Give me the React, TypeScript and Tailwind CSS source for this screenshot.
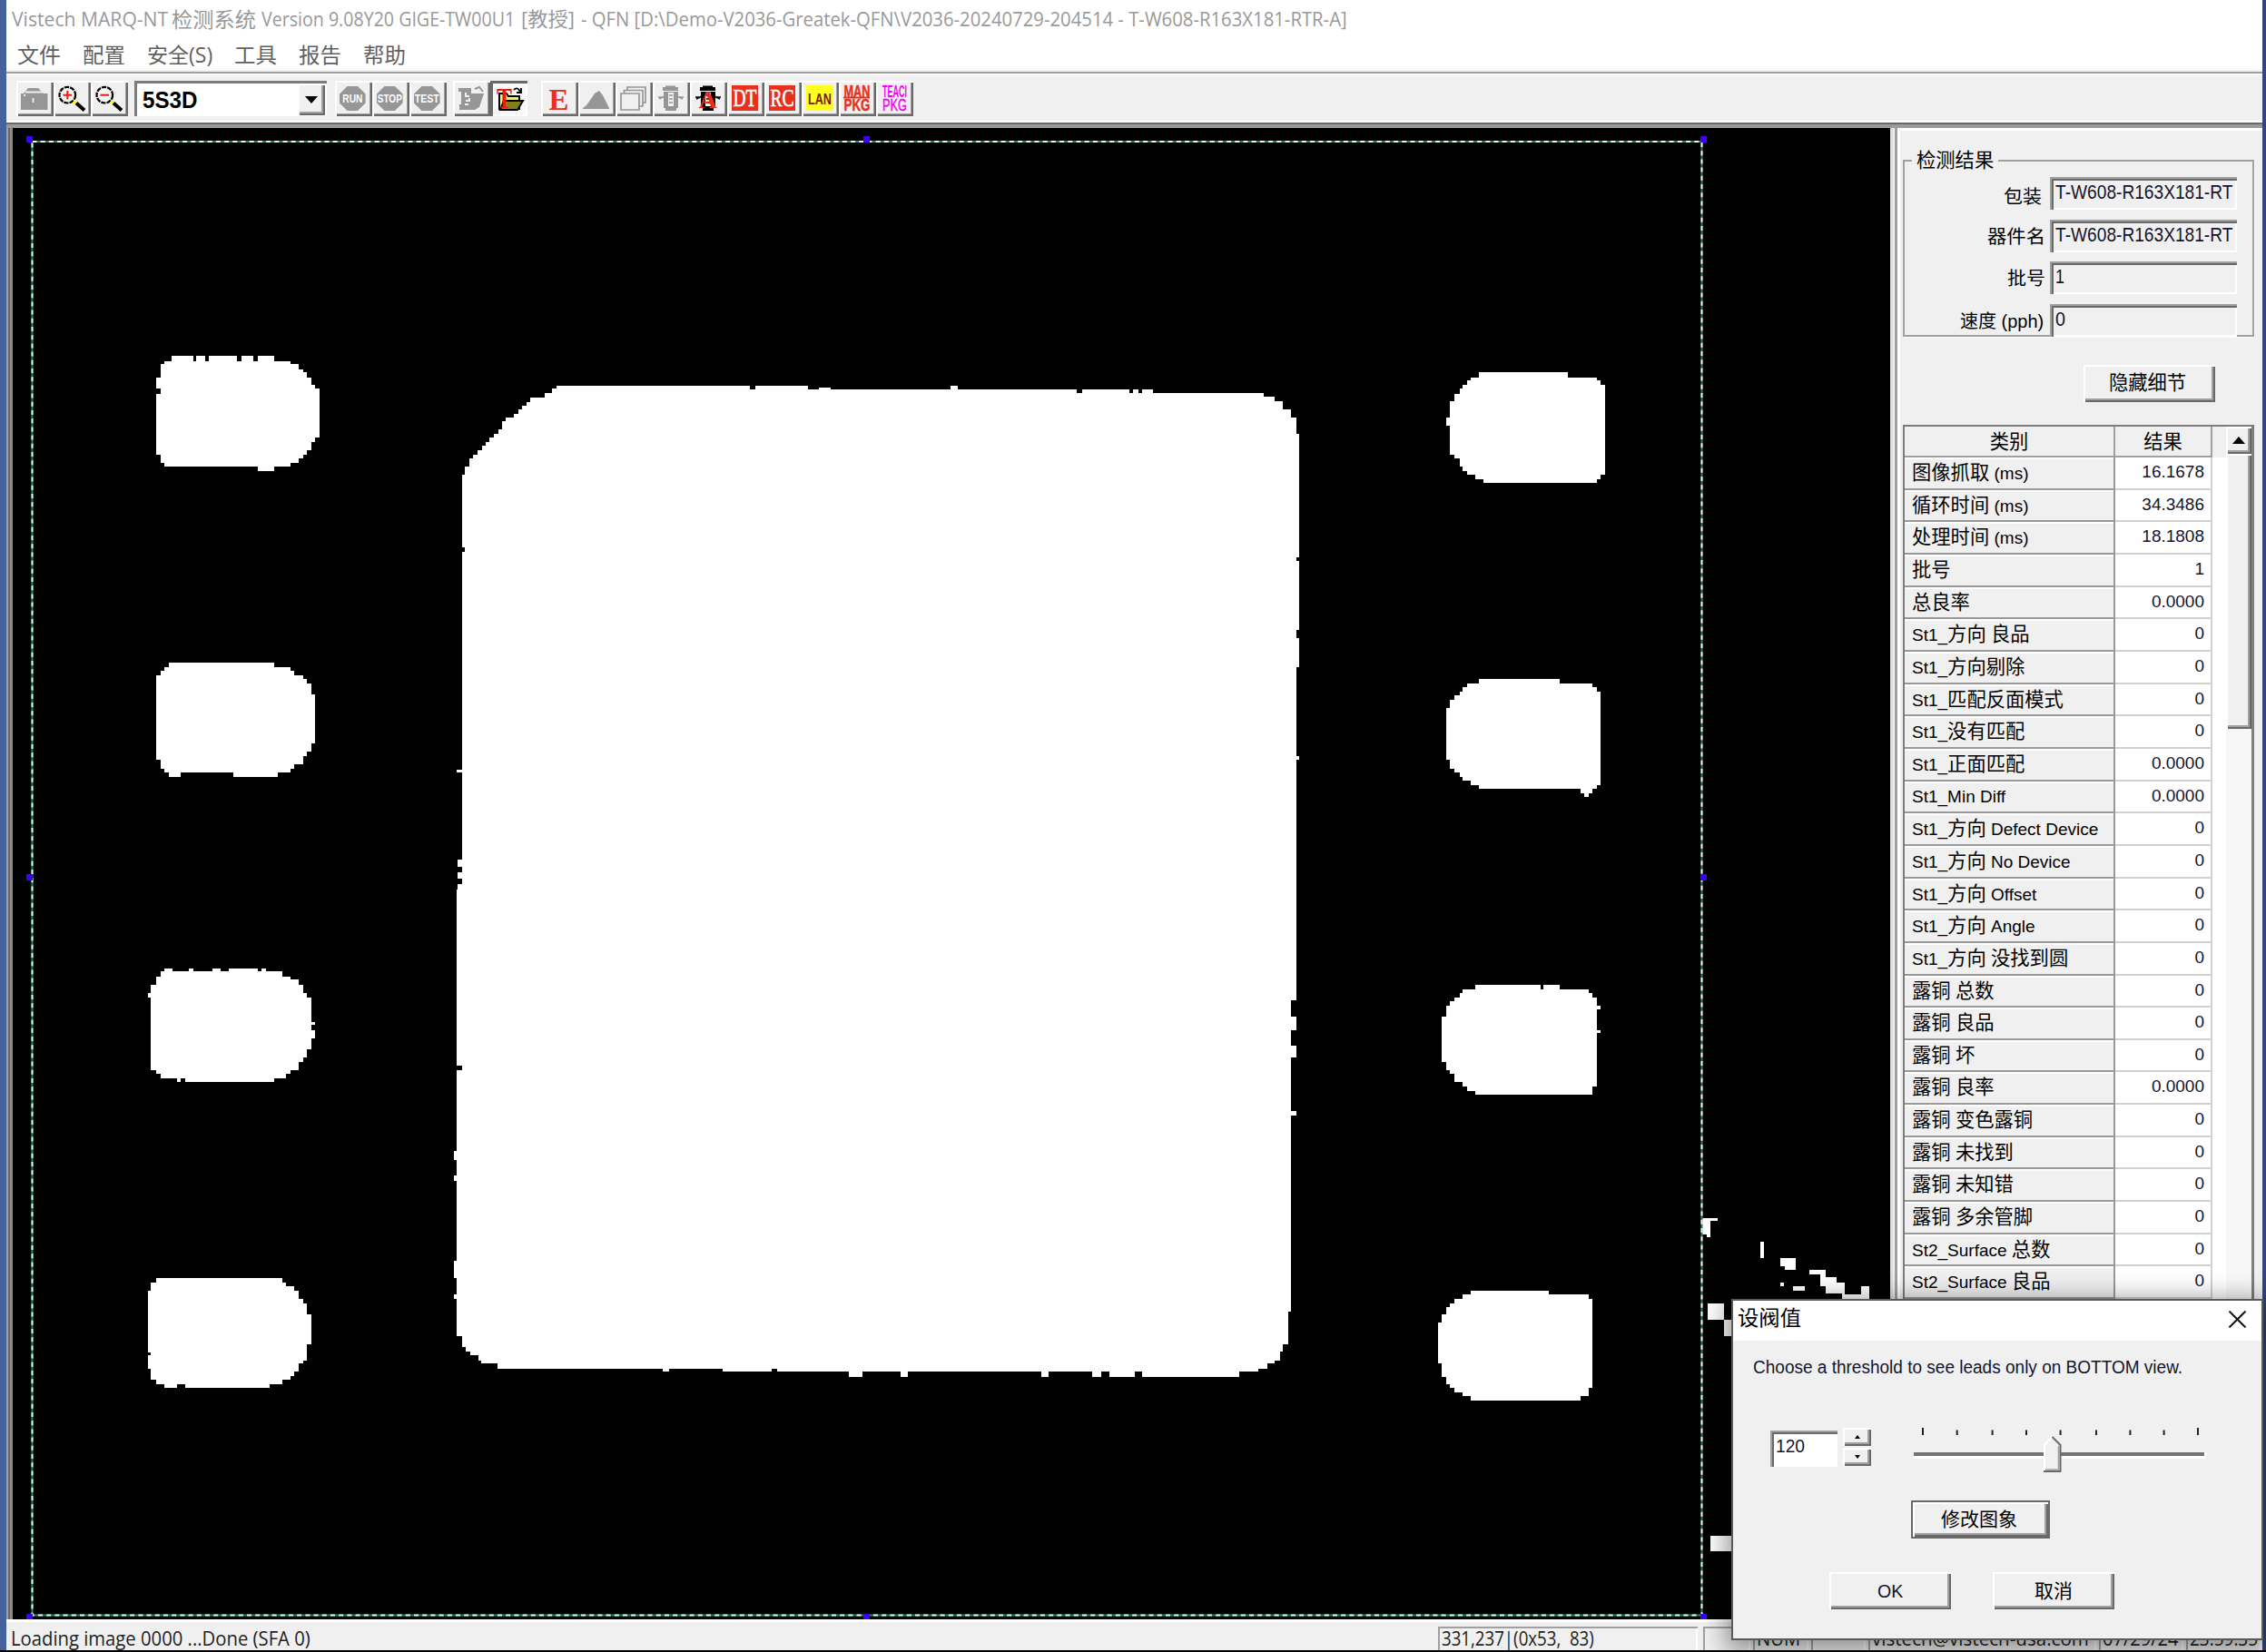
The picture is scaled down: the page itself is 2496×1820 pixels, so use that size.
import { useLayoutEffect, useRef, useState, type ReactNode } from 'react'

const ARIAL = "font-['Liberation_Sans','Noto_Sans_CJK_SC',sans-serif]"
const SEGOE = "font-['Open_Sans','Noto_Sans_CJK_SC',sans-serif]"

/* Single line of text condensed or stretched to an exact width. */
function Fit({ w, children, className = '' }: { w: number; children: ReactNode; className?: string }) {
  const ref = useRef<HTMLSpanElement>(null)
  const [scale, setScale] = useState(1)
  useLayoutEffect(() => {
    const measure = () => {
      if (ref.current && ref.current.offsetWidth) setScale(w / ref.current.offsetWidth)
    }
    measure()
    document.fonts?.ready.then(measure)
  }, [w])
  return (
    <span className={`inline-block shrink-0 whitespace-pre ${className}`} style={{ width: w }}>
      <span ref={ref} className="inline-block origin-left" style={{ transform: `scaleX(${scale})` }}>
        {children}
      </span>
    </span>
  )
}

/* Latin runs keep the row's size, Chinese runs are slightly larger. */
function Mixed({ text }: { text: string }) {
  return (
    <>
      {text.split(/([\u4e00-\u9fff]+)/).map((part, i) =>
        i % 2 ? (
          <span key={i} className="text-[21.3px]">{part}</span>
        ) : (
          <span key={i}>{part}</span>
        ),
      )}
    </>
  )
}

const RAISED = 'shadow-[inset_2px_2px_#ffffff,inset_-2px_-2px_#696969,inset_-4px_-4px_#a0a0a0]'
const SUNKEN = 'shadow-[inset_2px_2px_#a0a0a0,inset_4px_4px_#696969,inset_-2px_-2px_#ffffff]'

function Tool({ children, pressed }: { children: ReactNode; pressed?: boolean }) {
  return (
    <button
      className={`h-[39px] w-[41px] shrink-0 ${
        pressed
          ? 'bg-[#f8f8f8] shadow-[inset_3px_3px_#696969,inset_-2px_-2px_#ffffff]'
          : 'shadow-[inset_2px_2px_#ffffff,inset_-2px_-2px_#696969,inset_-3px_-3px_#a0a0a0]'
      }`}
    >
      <svg viewBox="0 0 41 39" className="h-[39px] w-[41px] overflow-visible">{children}</svg>
    </button>
  )
}

function Glass({ plus }: { plus?: boolean }) {
  return (
    <Tool>
      <circle cx="15.3" cy="15.7" r="8.8" fill="#f4f4f4" stroke="#000" strokeWidth="2.2" strokeDasharray="5.2 1.1" />
      <path d="M10.5 15.7H20" stroke="#e81c0c" strokeWidth="2" />
      {plus && <path d="M15.3 11V20.4" stroke="#e81c0c" strokeWidth="2" />}
      <path d="M22 22.5L26 26" stroke="#ffff00" strokeWidth="3.4" />
      <path d="M25 24.5L34 32.5" stroke="#000" strokeWidth="4" />
    </Tool>
  )
}

function Sign({ label }: { label: string }) {
  return (
    <Tool>
      <path d="M13.5 6H25L33.6 14.5V24.5L25 33H13.5L5 24.5V14.5Z" fill="#969696" />
      <text x="19.3" y="24" fontSize="13" fontWeight="700" fill="#fff" textAnchor="middle" textLength={label.length > 3 ? 27 : 22} lengthAdjust="spacingAndGlyphs" className={ARIAL}>
        {label}
      </text>
    </Tool>
  )
}

function Plate({ label }: { label: string }) {
  return (
    <Tool>
      <rect x="5" y="5" width="29" height="28" fill="#e8301c" />
      <text x="19.5" y="28" fontSize="27" fill="#fff" stroke="#fff" strokeWidth="0.6" textAnchor="middle" textLength="26" lengthAdjust="spacingAndGlyphs" className="font-['Liberation_Serif',serif]">
        {label}
      </text>
    </Tool>
  )
}

function Lantern({ color, hole }: { color: string; hole: string }) {
  return (
    <>
      <path d="M11 7H28V11H11ZM14 5.500H25V8H14ZM12 12H28V30H12ZM14 29H26V33H14Z" fill={color} />
      <path d="M17 13H23V28H17Z" fill={hole} />
      <path d="M18 16H22M18 20H22M18 24H22" stroke={color} strokeWidth="1.6" />
      <path d="M13 17L7 20M27 17L33 20M6 18H10M30 18H34" stroke={color} strokeWidth="1.6" />
    </>
  )
}

function Toolbar() {
  return (
    <div className="flex h-[50px] items-start bg-[#f0f0f0] pt-[6px] pl-[11px]">
      <Tool>
        <path d="M8 14L13 8H24L30 14" fill="#969696" />
        <path d="M5 14H34.500V32H5Z" fill="#969696" />
        <path d="M10 12.500H29M18.500 19V24M8 16H10" stroke="#f0f0f0" strokeWidth="1.800" />
      </Tool>
      <Glass plus />
      <Glass />
      <div className="ml-[7px] flex h-[39px] w-[212px] bg-white p-[3px] pr-[2px] shadow-[inset_3px_3px_#7c7c7c,inset_-2px_-2px_#ffffff]">
        <div className={`flex-1 pl-[6px] text-[25px] leading-[37px] font-bold text-black ${ARIAL}`}>
          <Fit w={61}>5S3D</Fit>
        </div>
        <div className={`flex h-[35px] w-[30px] items-center justify-center bg-[#f0f0f0] ${RAISED}`}>
          <svg viewBox="0 0 14 8" className="h-[8px] w-[14px]"><path d="M0 0H14L7 8Z" fill="#000" /></svg>
        </div>
      </div>
      <div className="ml-[9px] flex">
        <Sign label="RUN" />
        <Sign label="STOP" />
        <Sign label="TEST" />
      </div>
      <div className="ml-[7px] flex">
        <Tool>
          <path d="M6 8H20V14H34L29 29L24 32H7V26H9V12H6Z" fill="#969696" />
          <path d="M14 13V17H18M14 22H18V19M26 10L31 8L32 13M13 26H17" fill="none" stroke="#f0f0f0" strokeWidth="2" />
          <path d="M24 9L29 7L33 12" fill="none" stroke="#969696" strokeWidth="2" />
        </Tool>
        <Tool pressed>
          <path d="M10 14H18L20 17H32V31H10Z" fill="#f5ee6a" stroke="#000" strokeWidth="2" />
          <path d="M15 22H36L30 32H11Z" fill="#80801a" stroke="#000" strokeWidth="2" />
          <text x="15.500" y="29.500" fontSize="31" fontWeight="700" fill="#e81c0c" textAnchor="middle" textLength="17" lengthAdjust="spacingAndGlyphs" className="font-['Liberation_Serif',serif]">T</text>
          <path d="M26 10Q30 6 33 12M34 8V13H29" fill="none" stroke="#000" strokeWidth="1.800" />
        </Tool>
      </div>
      <div className="ml-[15px] flex">
        <Tool>
          <text x="19.500" y="31.500" fontSize="34" fontWeight="700" fill="#e8301c" textAnchor="middle" textLength="22" lengthAdjust="spacingAndGlyphs" className="font-['Liberation_Serif',serif]">E</text>
        </Tool>
        <Tool>
          <path d="M5 30L9 27L14 20L18 14L23 11L27 16L31 24L34 30V31H5Z" fill="#969696" />
        </Tool>
        <Tool>
          <path d="M13 7H33V24H13Z" fill="#f0f0f0" stroke="#969696" strokeWidth="1.700" />
          <path d="M9.500 10.500H30V28H9.500Z" fill="#f0f0f0" stroke="#969696" strokeWidth="1.700" />
          <path d="M6 14H26V32H6Z" fill="#f0f0f0" stroke="#969696" strokeWidth="1.700" />
        </Tool>
        <Tool><Lantern color="#969696" hole="#f0f0f0" /></Tool>
        <Tool>
          <Lantern color="#000" hole="#f0f0f0" />
          <text x="19.500" y="30" fontSize="28" fontWeight="700" fill="#e8301c" textAnchor="middle" className="font-['Liberation_Serif',serif]">A</text>
        </Tool>
        <Plate label="DT" />
        <Plate label="RC" />
        <Tool>
          <rect x="5" y="5" width="30" height="28" fill="#ffff20" />
          <text x="20" y="25.500" fontSize="16" fill="#7a2000" fontWeight="700" textAnchor="middle" textLength="26" lengthAdjust="spacingAndGlyphs" className={ARIAL}>LAN</text>
        </Tool>
        <Tool>
          <path d="M5 18.500H34" stroke="#e8301c" strokeWidth="2" />
          <text x="20" y="18" fontSize="18" fill="#e8301c" stroke="#e8301c" strokeWidth="0.5" fontWeight="700" textAnchor="middle" textLength="29" lengthAdjust="spacingAndGlyphs" className={ARIAL}>MAN</text>
          <text x="20" y="33" fontSize="18.500" fill="#e8301c" stroke="#e8301c" strokeWidth="0.5" fontWeight="700" textAnchor="middle" textLength="29" lengthAdjust="spacingAndGlyphs" className={ARIAL}>PKG</text>
        </Tool>
        <Tool>
          <text x="20.500" y="18" fontSize="18" fill="#f000f0" fontWeight="700" textAnchor="middle" textLength="27" lengthAdjust="spacingAndGlyphs" className={ARIAL}>TEACI</text>
          <text x="20.500" y="33" fontSize="18.500" fill="#f000f0" stroke="#f000f0" strokeWidth="0.4" textAnchor="middle" textLength="27" lengthAdjust="spacingAndGlyphs" className={ARIAL}>PKG</text>
        </Tool>
      </div>
    </div>
  )
}

const LEFT_TOP = [
  'M125 128H142V88H152V78H178V63H249V78H259V63H287V78H301V63H394V78H408V63H447V78H462V63H516V78H570V88H597V103H612V113H624V128H640V152H650V163H667V313H650V328H640V353H624V368H612V378H597V393H570V403H516V418H463V403H152V393H142V368H125V178H142V163H125Z',
  'M125 1047H142V1033H152V1022H168V1008H516V1022H570V1033H581V1047H612V1058H624V1072H640V1107H650V1257H640V1282H624V1297H612V1322H581V1337H570V1347H527V1362H382V1347H206V1362H168V1347H152V1337H142V1307H125Z',
]
const RIGHT_TOP = [
  'M730 211H741V157H757V131H773V115H784V103H799V88H811V77H837V61H1131V77H1228V88H1239V103H1255V398H1239V414H1228V426H853V414H826V398H799V388H784V372H773V345H757V334H741V238H730Z',
  'M730 1169H741V1143H757V1127H773V1116H784V1100H799V1089H837V1073H1105V1089H1212V1100H1228V1116H1239V1425H1228V1437H1212V1452H1201V1463H1185V1452H1174V1437H837V1425H811V1410H784V1398H773V1384H757V1372H741V1340H730Z',
]
const LEFT_BOTTOM = [
  'M98 132H109V104H125V77H142V61H152V50H179V61H233V50H248V61H313V50H340V61H366V50H463V61H473V50H490V61H543V77H570V88H597V104H612V131H624V147H640V227H650V238H640V254H650V281H640V318H624V345H612V361H597V388H570V398H554V414H516V426H221V414H206V426H195V414H142V398H125V388H109V147H98Z',
  'M98 1116H109V1089H125V1073H543V1089H554V1100H581V1116H597V1143H612V1158H624V1195H640V1292H624V1346H612V1357H597V1384H581V1398H570V1410H543V1426H500V1437H221V1426H195V1437H152V1426H125V1410H109V1373H98V1330H109V1319H98Z',
]
const RIGHT_BOTTOM = [
  'M714 211H730V174H741V158H757V147H773V131H784V120H826V104H1041V120H1051V104H1105V120H1201V131H1212V147H1228V174H1239V185H1228V254H1239V265H1228V441H1212V468H826V457H799V441H784V426H757V398H741V388H730V361H714Z',
  'M703 1222H714V1195H730V1169H741V1158H757V1142H784V1127H810V1115H1067V1127H1201V1142H1212V1437H1201V1464H1174V1480H810V1464H784V1453H757V1437H741V1426H730V1400H714V1357H703Z',
]
const DEBRIS =
  'M35 65H80V76H59V129H50V119H35ZM195 145H204V199H195ZM248 198H292V236H261V226H248ZM328 236H371V262H401V280H424V318H468V290H490V337H417V316H372V290H358V253H328ZM248 279H260V290H248ZM284 290H315V306H284ZM51 348H95V402H51ZM95 402H125V456H95ZM59 1115H125V1167H59Z'

const DIE =
  'M590 438V438H584.300V442.500H580V447H575.300V451.400H571.300V455.700H566V460H557.300V464.300H553.300V473H548.700V478H544.300V482H539.300V487H535.300V491H530.700V496H526.300V501H521.300V505H517.300V513.600H512.300V523H508.700V563.600H508.700V603H512.300V608H508.700V847.500H503.300V851H508.700V947H504V955H508.700V961H504V968H508.700V974H504V980H503.300V1174H509V1179H503.300V1268H500V1277.700H503.300V1295.300H500V1300.700H503.300V1389H500V1407.700H503.300V1425.700H500V1430.700H503.300V1471.700H509V1484H512.700V1489H517.700V1493H526.700V1498.700H530V1502H548.300V1507.700H730V1511.300H737V1507.700H796V1511.300H850V1507.700H856V1511.300H935V1516.700H950V1511.300H992V1516.700H1000V1511.300H1147V1516.700H1155V1511.300H1203V1516.700H1213V1511.300H1222V1516.700H1250V1511.300H1258V1516.700H1365V1511.300H1386.300V1507.700H1395.700V1502.300H1404.300V1498.700H1409.700V1489.300H1413.300V1480.700H1418.700V1445H1422.300V1229.300H1427.700V1224H1422.300V1165H1427.700V1152.300H1422.300V1135H1427.700V1120.300H1422.300V1102.300H1427.700V837.300H1431V833.300H1427.700V735.300H1431V702.700H1427.700V694H1431V617.700H1427.700V614H1431V478.300H1427.700V460.300H1422V451.300H1413V442.300H1404.300V437.300H1391.700V433.300H1270V429H1258V433H1254V429H1248V433H1244V429H1192V433H1186V429H1055V424.500H1047V429H915V427H902V429H890V424.500H832V429H826V424.500H613V428H608V433H600V438Z'

function Viewport() {
  const handles = [
    [29, 150], [951, 150], [1873, 150],
    [29, 963], [1873, 963],
    [29, 1778], [951, 1778], [1873, 1778],
  ]
  return (
    <svg viewBox="14 141 2068 1643" className="h-[1643px] w-[2068px] shrink-0 bg-black">
      <g fill="#fff" shapeRendering="crispEdges">
        <path d={DIE} />
        <g transform="translate(130 370) scale(0.33333 0.35714)">{LEFT_TOP.map((d) => <path key={d} d={d} />)}</g>
        <g transform="translate(1350 390) scale(0.33333)">{RIGHT_TOP.map((d) => <path key={d} d={d} />)}</g>
        <g transform="translate(130 1050) scale(0.33333)">{LEFT_BOTTOM.map((d) => <path key={d} d={d} />)}</g>
        <g transform="translate(1350 1050) scale(0.33333)">{RIGHT_BOTTOM.map((d) => <path key={d} d={d} />)}</g>
        <path transform="translate(1860 1320) scale(0.40568 0.33333)" d={DEBRIS} />
      </g>
      <rect x="35.500" y="156" width="1839" height="1623.500" fill="none" stroke="#1d8a6c" strokeWidth="2" />
      <rect x="35.500" y="156" width="1839" height="1623.500" fill="none" stroke="#f4f4f4" strokeWidth="2" strokeDasharray="5 4.200" />
      {handles.map(([x, y]) => <rect key={`${x}-${y}`} x={x} y={y} width="7" height="7" fill="#3c00ff" />)}
    </svg>
  )
}

const ROWS: [string, string][] = [
  ['图像抓取 (ms)', '16.1678'],
  ['循环时间 (ms)', '34.3486'],
  ['处理时间 (ms)', '18.1808'],
  ['批号', '1'],
  ['总良率', '0.0000'],
  ['St1_方向 良品', '0'],
  ['St1_方向剔除', '0'],
  ['St1_匹配反面模式', '0'],
  ['St1_没有匹配', '0'],
  ['St1_正面匹配', '0.0000'],
  ['St1_Min Diff', '0.0000'],
  ['St1_方向 Defect Device', '0'],
  ['St1_方向 No Device', '0'],
  ['St1_方向 Offset', '0'],
  ['St1_方向 Angle', '0'],
  ['St1_方向 没找到圆', '0'],
  ['露铜 总数', '0'],
  ['露铜 良品', '0'],
  ['露铜 坏', '0'],
  ['露铜 良率', '0.0000'],
  ['露铜 变色露铜', '0'],
  ['露铜 未找到', '0'],
  ['露铜 未知错', '0'],
  ['露铜 多余管脚', '0'],
  ['St2_Surface 总数', '0'],
  ['St2_Surface 良品', '0'],
]

function Field({ label, value, labelWidth, gap, valueWidth }: { label: string; value: string; labelWidth: number; gap: string; valueWidth: number }) {
  return (
    <div className="flex h-[46.500px] items-start justify-end">
      <span className={`text-[20px] leading-[30px] ${gap}`}>
        <Fit w={labelWidth}>{label}</Fit>
      </span>
      <div className={`h-[36px] w-[206px] overflow-hidden pl-[6px] text-[21.500px] leading-[34px] text-[#14142c] ${SUNKEN}`}>
        <Fit w={valueWidth}>{value}</Fit>
      </div>
    </div>
  )
}

function ResultsPanel() {
  return (
    <aside className={`flex w-[405px] shrink-0 flex-col border-l-[3px] border-[#a0a0a0] bg-[#f0f0f0] pl-[6px] text-black shadow-[inset_3px_3px_#ffffff] ${ARIAL}`}>
      <fieldset className="mt-[24px] h-[206px] w-[387px] border-2 border-[#a0a0a0] pr-[17px] shadow-[1px_1px_#ffffff]">
        <legend className="ml-[8px] h-[24px] px-[5px] text-[21.300px] leading-[25px]">检测结果</legend>
        <div className="pt-[6px]">
          <Field label="包装" value="T-W608-R163X181-RT" labelWidth={42} gap="mr-[9px] pt-[7px]" valueWidth={195} />
          <Field label="器件名" value="T-W608-R163X181-RT" labelWidth={64} gap="mr-[5px] pt-[4px]" valueWidth={195} />
          <Field label="批号" value="1" labelWidth={42} gap="mr-[5px] pt-[4px]" valueWidth={10} />
          <Field label="速度 (pph)" value="0" labelWidth={92} gap="mr-[7px] pt-[4px]" valueWidth={11} />
        </div>
      </fieldset>
      <button className={`mt-[31px] ml-[199px] h-[41px] w-[145px] pr-[4px] text-[21.300px] ${RAISED}`}>隐藏细节</button>
      <div className="mt-[25px] flex h-[1200px] w-[387px] border-2 border-r-[3px] border-[#7c7c7c] bg-white">
        <div className="flex w-[354px] flex-col">
          <div className="flex h-[34px] bg-[#f0f0f0] text-[21.300px] leading-[34px]">
            <div className="w-[232px] border-r-2 border-[#a0a0a0] text-center">
              <div className="h-full border-b-2 border-[#a0a0a0]">类别</div>
            </div>
            <div className="w-[107px] border-r-2 border-b-2 border-[#a0a0a0] text-center">结果</div>
          </div>
          {ROWS.map(([label, value]) => (
            <div key={label} className="flex h-[35.670px] shrink-0 text-[19px] text-[#14142c]">
              <div className="w-[232px] border-r-2 border-b-2 border-[#999999] bg-[#f0f0f0] pl-[8px] leading-[34px] whitespace-pre text-black shadow-[inset_0_2px_#ffffff]">
                <Mixed text={label} />
              </div>
              <div className="w-[107px] border-r-2 border-b-2 border-[#d0d0d0] bg-white pr-[7px] text-right leading-[31px]">{value}</div>
            </div>
          ))}
        </div>
        <div className="flex flex-1 flex-col bg-[#f7f7f7]">
          <div className={`flex h-[30px] items-center justify-center bg-[#f0f0f0] ${RAISED}`}>
            <svg viewBox="0 0 14 8" className="h-[8px] w-[14px]"><path d="M0 8H14L7 0Z" fill="#000" /></svg>
          </div>
          <div className={`h-[303px] bg-[#f0f0f0] ${RAISED}`} />
        </div>
      </div>
    </aside>
  )
}

function Pane({ w, text, textWidth, ml = 'ml-[6px]' }: { w: number; text?: string; textWidth?: number; ml?: string }) {
  return (
    <div className={`mt-[8px] h-[26px] shrink-0 overflow-hidden pl-[4px] leading-[27px] shadow-[inset_2px_2px_#a0a0a0,inset_-2px_0_#ffffff] ${ml}`} style={{ width: w }}>
      {text && <Fit w={textWidth ?? w}>{text}</Fit>}
    </div>
  )
}

function StatusBar() {
  return (
    <div className={`flex h-[34px] overflow-hidden bg-[#f0f0f0] text-[21px] text-[#222222] shadow-[inset_0_3px_#ffffff] ${SEGOE}`}>
      <div className="mt-[8px] w-[1571px] pl-[5px] leading-[27px]">
        <Fit w={330}>Loading image 0000 ...Done (SFA 0)</Fit>
      </div>
      <Pane w={286} text="331,237|(0x53,  83)" textWidth={168} />
      <Pane w={52} />
      <Pane w={61} text="NUM" textWidth={48} ml="ml-[3px]" />
      <Pane w={60} ml="ml-[3px]" />
      <Pane w={251} text="vistech@vistech-usa.com" textWidth={239} ml="ml-[3px]" />
      <Pane w={93} text="07/29/24" textWidth={83} ml="ml-[3px]" />
      <Pane w={83} text="23:59:35" textWidth={75} ml="ml-[3px]" />
    </div>
  )
}

function ThresholdDialog() {
  const ticks = [0, 37.7, 76.600, 114, 151.600, 191, 228.400, 265.600, 303]
  return (
    <div className={`absolute top-[1431px] left-[1907px] flex h-[376px] w-[586px] flex-col border-2 border-[#5a5a5a] bg-[#f0f0f0] text-black shadow-[0_6px_26px_6px_rgba(0,0,0,0.400)] ${ARIAL}`}>
      <div className="flex h-[44px] shrink-0 items-start justify-between bg-white pt-[4px] pr-[17px] pl-[5px]">
        <span className="text-[23px] leading-[30px]"><Fit w={70}>设阀值</Fit></span>
        <svg viewBox="0 0 19 19" className="mt-[7px] h-[19px] w-[19px]"><path d="M.5 .5L18.500 18.500M18.500 .5L.5 18.500" stroke="#111" strokeWidth="2" /></svg>
      </div>
      <p className="mt-[14px] ml-[22px] text-[20.500px] leading-[30px] text-[#14142c]">
        <Fit w={473}>Choose a threshold to see leads only on BOTTOM view.</Fit>
      </p>
      <div className="mt-[52px] flex h-[52px] items-start pl-[41px]">
        <div className={`mt-[3px] h-[40px] w-[74px] bg-white pl-[6px] text-[21px] leading-[34px] text-[#14142c] ${SUNKEN}`}>
          <Fit w={32}>120</Fit>
        </div>
        <div className="ml-[6px] flex flex-col gap-[2px]">
          <div className={`flex h-[20px] w-[31px] items-center justify-center ${RAISED}`}>
            <svg viewBox="0 0 6 4" className="h-[4px] w-[6px]"><path d="M0 4H6L3 0Z" /></svg>
          </div>
          <div className={`flex h-[20px] w-[31px] items-center justify-center ${RAISED}`}>
            <svg viewBox="0 0 6 4" className="h-[4px] w-[6px]"><path d="M0 0H6L3 4Z" /></svg>
          </div>
        </div>
        <svg viewBox="0 0 324 52" className="ml-[47px] h-[52px] w-[324px]">
          {ticks.map((t, i) => (
            <rect key={t} x={9 + t} y={i === 0 || i === 8 ? 0 : 2.500} width="2" height={i === 0 || i === 8 ? 8 : 5.500} fill="#222" />
          ))}
          <rect x="0" y="27" width="322" height="7" fill="#fff" />
          <rect x="0" y="27" width="320" height="4" fill="#747474" />
          <path d="M143 18L152.500 9.500L162 18V49H143Z" fill="#f0f0f0" />
          <path d="M144 49V18.500L152.500 10" fill="none" stroke="#fff" strokeWidth="2" />
          <path d="M152.500 10L161.500 19V48H143" fill="none" stroke="#696969" strokeWidth="2" />
          <path d="M159.500 20V46H145" fill="none" stroke="#a0a0a0" strokeWidth="1.500" />
        </svg>
      </div>
      <button className="mt-[28px] ml-[196px] h-[42px] w-[153px] shrink-0 pr-[3px] text-[21px] shadow-[inset_0_0_0_2px_#696969,inset_4px_4px_#ffffff,inset_-4px_-4px_#696969,inset_-6px_-6px_#a0a0a0]">修改图象</button>
      <div className="mt-[37px] flex pl-[106px]">
        <button className={`h-[41px] w-[134px] text-[21px] text-[#14142c] ${RAISED}`}><Fit w={28}>OK</Fit></button>
        <button className={`ml-[46px] h-[41px] w-[134px] text-[21px] ${RAISED}`}>取消</button>
      </div>
    </div>
  )
}

export default function App() {
  return (
    <div className="relative flex h-[1820px] w-[2496px] flex-col overflow-hidden bg-black">
      <div className="flex h-[1818px]">
        <div className="w-[7px] shrink-0 bg-[#46629c]" />
        <div className="flex w-[2485px] shrink-0 flex-col bg-[#f0f0f0]">
          <div className={`flex h-[42px] bg-white pl-[6px] text-[21.500px] leading-[42px] text-[#999999] ${SEGOE}`}>
            <Fit w={172}>Vistech MARQ-NT</Fit>
            <Fit w={93} className="ml-[4px] text-[23px]">检测系统</Fit>
            <Fit w={279} className="ml-[6px]">Version 9.08Y20 GIGE-TW00U1</Fit>
            <Fit w={59} className="ml-[7px]">[教授]</Fit>
            <Fit w={844} className="ml-[7px]">{'- QFN [D:\\Demo-V2036-Greatek-QFN\\V2036-20240729-204514 - T-W608-R163X181-RTR-A]'}</Fit>
          </div>
          <nav className={`flex h-[35px] gap-[24px] bg-white pl-[12px] text-[23px] leading-[36px] text-[#5f5f5f] ${SEGOE}`}>
            <Fit w={48}>文件</Fit>
            <Fit w={47}>配置</Fit>
            <Fit w={72}>安全(S)</Fit>
            <Fit w={47}>工具</Fit>
            <Fit w={47}>报告</Fit>
            <Fit w={47}>帮助</Fit>
          </nav>
          <div className="h-[6px] border-b-2 border-[#fafafa] bg-[#f0f0f0] shadow-[inset_0_-2px_#a0a0a0]" />
          <Toolbar />
          <div className="h-[8px] border-t-2 border-b-[4px] border-t-white border-b-[#9a9a9a] bg-[#696969]" />
          <div className="flex h-[1643px]">
            <div className="w-[7px] shrink-0 border-r-[3px] border-l-[2px] border-r-[#8a8a8a] border-l-[#a0a0a0] bg-[#696969]" />
            <Viewport />
            <div className="w-[5px] shrink-0 border-r-2 border-r-[#f0f0f0] bg-[#dcdcdc]" />
            <ResultsPanel />
          </div>
          <StatusBar />
        </div>
        <div className="flex-1 bg-[#33457a]" />
      </div>
      <ThresholdDialog />
    </div>
  )
}
